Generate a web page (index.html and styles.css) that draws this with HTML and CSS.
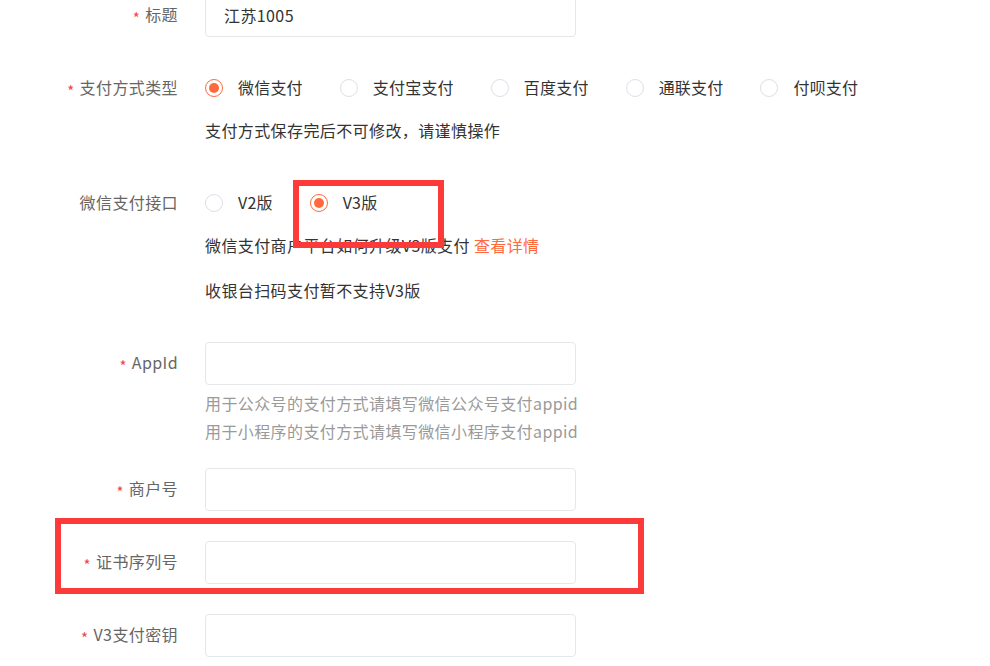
FILE: index.html
```html
<!DOCTYPE html>
<html lang="zh-CN">
<head>
    <meta charset="UTF-8">
    <meta name="viewport" content="width=device-width, initial-scale=1.0">
    <title>支付方式配置</title>
    <link rel="stylesheet" href="styles.css">
</head>
<body>
    <div class="page">
        <form class="pay-form">
            <div class="form-item">
                <label class="form-label"><span class="req">*</span>标题</label>
                <div class="form-content">
                    <input type="text" class="text-input" value="江苏1005">
                </div>
            </div>

            <div class="form-item">
                <label class="form-label"><span class="req">*</span>支付方式类型</label>
                <div class="form-content">
                    <div class="radio-group">
                        <span class="radio checked"><span class="dot"></span>微信支付</span>
                        <span class="radio"><span class="dot"></span>支付宝支付</span>
                        <span class="radio"><span class="dot"></span>百度支付</span>
                        <span class="radio"><span class="dot"></span>通联支付</span>
                        <span class="radio"><span class="dot"></span>付呗支付</span>
                    </div>
                    <div class="note">支付方式保存完后不可修改，请谨慎操作</div>
                </div>
            </div>

            <div class="form-item">
                <label class="form-label">微信支付接口</label>
                <div class="form-content">
                    <div class="radio-group">
                        <span class="radio"><span class="dot"></span>V2版</span>
                        <span class="radio checked"><span class="dot"></span>V3版</span>
                    </div>
                    <div class="note">微信支付商户平台如何升级V3版支付 <a class="link" href="#">查看详情</a></div>
                    <div class="note note-last">收银台扫码支付暂不支持V3版</div>
                </div>
            </div>

            <div class="form-item item-tight">
                <label class="form-label"><span class="req">*</span>AppId</label>
                <div class="form-content">
                    <input type="text" class="text-input">
                    <div class="tips">
                        <p>用于公众号的支付方式请填写微信公众号支付appid</p>
                        <p>用于小程序的支付方式请填写微信小程序支付appid</p>
                    </div>
                </div>
            </div>

            <div class="form-item">
                <label class="form-label"><span class="req">*</span>商户号</label>
                <div class="form-content">
                    <input type="text" class="text-input">
                </div>
            </div>

            <div class="form-item">
                <label class="form-label"><span class="req">*</span>证书序列号</label>
                <div class="form-content">
                    <input type="text" class="text-input">
                </div>
            </div>

            <div class="form-item">
                <label class="form-label"><span class="req">*</span>V3支付密钥</label>
                <div class="form-content">
                    <input type="text" class="text-input">
                </div>
            </div>
        </form>

        <!-- annotation boxes drawn over the form -->
        <div class="mark mark-version"></div>
        <div class="mark mark-serial"></div>
    </div>
</body>
</html>
```

FILE: styles.css
```css
body {
    margin: 0;
    padding: 0;
    background-color: #fff;
    font-family: "Noto Sans CJK SC", "Microsoft YaHei", sans-serif;
    font-size: 16px;
    letter-spacing: 0.4px;
    color: #333;
}

.page {
    position: relative;
    display: flow-root;
    height: 666px;
    overflow: hidden;
}

.pay-form {
    margin-top: -6px;
}

.form-item {
    display: flex;
    margin-bottom: 29px;
}

.item-tight {
    margin-bottom: 23px;
}

.form-label {
    width: 205px;
    padding-right: 27px;
    padding-bottom: 3px;
    box-sizing: border-box;
    flex-shrink: 0;
    text-align: right;
    line-height: 40px;
    color: #666;
    white-space: nowrap;
}

.req {
    display: inline-block;
    color: #f5424f;
    margin-right: 5px;
    font-size: 15px;
    transform: translateY(3px);
}

.form-content {
    flex: 1;
}

.text-input {
    display: block;
    width: 371px;
    height: 43px;
    box-sizing: border-box;
    padding: 0 18px 2px;
    border: 1px solid #e6e7eb;
    border-radius: 4px;
    font-family: inherit;
    font-size: 16px;
    letter-spacing: 0.4px;
    color: #333;
    outline: none;
}

.radio-group {
    display: flex;
    align-items: center;
    height: 43px;
    padding-bottom: 3px;
    box-sizing: border-box;
}

.radio {
    display: inline-flex;
    align-items: center;
    margin-right: 37px;
    letter-spacing: 0.2px;
    color: #333;
    cursor: pointer;
}

.dot {
    width: 18px;
    height: 18px;
    box-sizing: border-box;
    border: 1px solid #dcdfe6;
    border-radius: 50%;
    margin-right: 15px;
    margin-top: 2px;
    position: relative;
}

.radio.checked .dot {
    border-color: #ff6a3c;
}

.radio.checked .dot::after {
    content: "";
    position: absolute;
    left: 3px;
    top: 3px;
    width: 10px;
    height: 10px;
    border-radius: 50%;
    background-color: #ff6a3c;
}

.note {
    line-height: 40px;
    padding-bottom: 3px;
    color: #333;
}

.note-last {
    margin-top: 2px;
}

.link {
    color: #ff6a3c;
    text-decoration: none;
}

.tips {
    padding-top: 4px;
    color: #9a9a9a;
}

.tips p {
    margin: 0;
    line-height: 28px;
}

.mark {
    position: absolute;
    border: 6px solid #fc3a3a;
    box-sizing: border-box;
}

.mark-version {
    left: 293px;
    top: 180px;
    width: 151px;
    height: 68px;
}

.mark-serial {
    left: 55px;
    top: 518px;
    width: 589px;
    height: 76px;
}
```
